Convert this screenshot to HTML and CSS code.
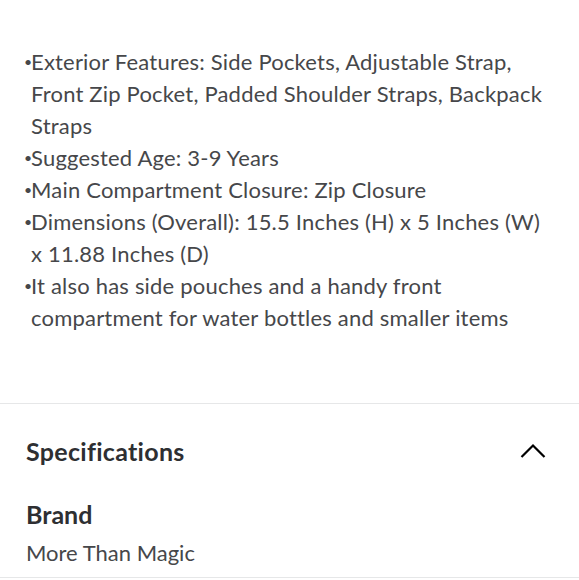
FILE: index.html
```html
<!DOCTYPE html>
<html>
<head>
<meta charset="utf-8">
<link rel="stylesheet" href="styles.css">
</head>
<body>
<section class="features">
  <ul class="list">
    <li class="item"><span class="dot">•</span><span>Exterior Features: Side Pockets, Adjustable Strap, Front Zip Pocket, Padded Shoulder Straps, Backpack Straps</span></li>
    <li class="item"><span class="dot">•</span><span>Suggested Age: 3-9 Years</span></li>
    <li class="item"><span class="dot">•</span><span>Main Compartment Closure: Zip Closure</span></li>
    <li class="item"><span class="dot">•</span><span>Dimensions (Overall): 15.5 Inches (H) x 5 Inches (W) x 11.88 Inches (D)</span></li>
    <li class="item"><span class="dot">•</span><span>It also has side pouches and a handy front compartment for water bottles and smaller items</span></li>
  </ul>
</section>
<section class="specs">
  <div class="specs-head">
    <h2 class="specs-title">Specifications</h2>
    <svg class="chevron" width="26" height="16" viewBox="0 0 26 16"><path d="M1.5 14 L13 2.5 L24.5 14" fill="none" stroke="#000" stroke-width="2.2"/></svg>
  </div>
  <div class="spec">
    <h3 class="spec-name">Brand</h3>
    <div class="spec-value">More Than Magic</div>
  </div>
</section>
</body>
</html>
```
FILE: styles.css
```css
html, body {
  margin: 0;
  padding: 0;
  background: #fff;
  font-family: Lato, "Noto Sans", sans-serif;
}
.features {
  padding: 46px 30px 69px 24px;
  border-bottom: 1px solid #e6e7e8;
}
.list {
  list-style: none;
  margin: 0;
  padding: 0;
}
.item {
  display: flex;
  font-size: 22px;
  line-height: 32px;
  letter-spacing: 0.2px;
  color: #46474a;
}
.dot {
  width: 7px;
  flex: none;
  font-size: 14px;
  letter-spacing: 0;
}
.specs {
  padding: 0 32px 0 26px;
  border-bottom: 1px solid #e6e7e8;
}
.specs-head {
  display: flex;
  justify-content: space-between;
  align-items: center;
  height: 94px;
}
.specs-title {
  margin: 0;
  font-size: 25px;
  font-weight: 700;
  letter-spacing: 0.3px;
  color: #2e2f32;
}
.chevron {
  display: block;
  margin-right: 1px;
}
.spec {
  padding-bottom: 8px;
}
.spec-name {
  margin: 0;
  font-size: 25px;
  line-height: 32px;
  font-weight: 700;
  color: #2e2f32;
}
.spec-value {
  margin-top: 7px;
  font-size: 22px;
  line-height: 32px;
  color: #46474a;
}
```
